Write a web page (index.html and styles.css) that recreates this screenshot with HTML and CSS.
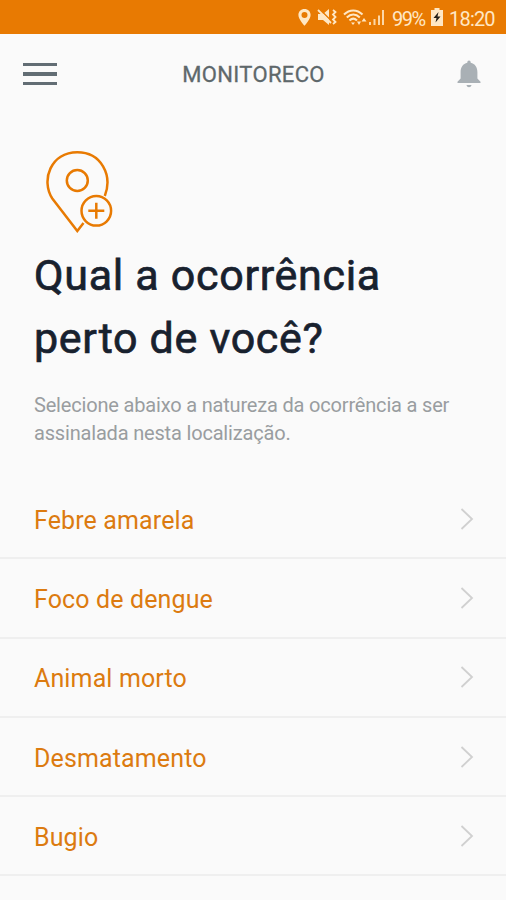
FILE: index.html
```html
<!DOCTYPE html>
<html lang="pt-BR">
<head>
<meta charset="utf-8">
<title>Monitoreco</title>
<link rel="stylesheet" href="styles.css">
</head>
<body>
<div class="status">
  <svg class="status-icons" width="90" height="24" viewBox="0 0 90 24" fill="#ffe7c4">
    <path fill-rule="evenodd" d="M6.500 4C2.900 4 0.400 6.600 0.400 10c0 4.200 6.100 10.800 6.100 10.800S12.600 14.200 12.600 10C12.600 6.600 10.100 4 6.500 4zm0 3a3 3 0 1 1 0 6 3 3 0 0 1 0-6z"/>
    <path d="M20 9h5l6-5v16l-6-5h-5z"/>
    <path d="M22 4.500l12 12" stroke="#e87a02" stroke-width="1.500"/>
    <path d="M20 5l13 13M35 5l2.500 2-2.500 2.500 2.500 2.500-2.500 2.500 2.500 2.500-2.500 2" fill="none" stroke="#ffe7c4" stroke-width="1.800"/>
    <path d="M46 9.500c5.500-5.500 13-5.500 18.500 0M48.800 12.500c4-4 9-4 13 0M51.500 15.500c2.500-2.500 5-2.500 7.500 0" fill="none" stroke="#ffe7c4" stroke-width="2"/>
    <path d="M53 17.500h4l-2 2.500zM59 16.500h4L61 20zM66 13l2.500 3.500h-5z"/>
    <path d="M71 17h2v3h-2zM75.500 14h2v6h-2zM80 10.500h2V20h-2zM84 5h2v15h-2z" fill-opacity=".85"/>
  </svg>
  <span class="percent">99%</span>
  <svg class="battery" width="12" height="18" viewBox="0 0 12 18">
    <path fill="#ffe7c4" d="M3.500 0h5v2H12v16H0V2h3.500z"/>
    <path fill="#252019" d="M7.500 4L2.500 10h3L4.500 14.500l5-6H6.500z"/>
  </svg>
  <span class="clock">18:20</span>
</div>
<header class="topbar">
  <div class="menu"><i></i><i></i><i></i></div>
  <span class="brand">MONITORECO</span>
  <svg class="bell" width="24" height="28" viewBox="0 0 24 28" fill="#a9b0b5">
    <path d="M10.300 2.300a1.700 1.700 0 0 1 3.400 0v.5C18 3.700 20.400 7.500 20.400 12v6.500l3.100 3.200V23H.5v-1.300l3.100-3.200V12c0-4.500 2.400-8.300 6.700-9.200zM9.500 25h5c-.3 1.500-1.300 2.200-2.500 2.200S9.800 26.500 9.500 25z"/>
  </svg>
</header>
<main>
  <section class="intro">
    <svg class="pin" width="70" height="84" viewBox="0 0 70 84" fill="none" stroke="#e87a02" stroke-width="2.500">
      <path d="M38.500 74L32.300 82 7.300 49.500C-4.500 31 6 3.200 32.300 3.200c24 0 35.500 23 27.500 43.800"/>
      <circle cx="32.300" cy="31.500" r="10.500"/>
      <circle cx="51.300" cy="61.800" r="14.800"/>
      <path d="M43.300 61.800h16M51.300 53.800v16"/>
    </svg>
    <h1><span class="first">Qual a ocorrência</span><br><span class="second">perto de você?</span></h1>
    <p>Selecione abaixo a natureza da ocorrência a ser<br>assinalada nesta localização.</p>
  </section>
  <ul class="list">
    <li><span>Febre amarela</span><svg class="chevron" width="14" height="22" viewBox="0 0 14 22"><path d="M1.500 1L12 11 1.500 21"/></svg></li>
    <li><span>Foco de dengue</span><svg class="chevron" width="14" height="22" viewBox="0 0 14 22"><path d="M1.500 1L12 11 1.500 21"/></svg></li>
    <li><span>Animal morto</span><svg class="chevron" width="14" height="22" viewBox="0 0 14 22"><path d="M1.500 1L12 11 1.500 21"/></svg></li>
    <li><span>Desmatamento</span><svg class="chevron" width="14" height="22" viewBox="0 0 14 22"><path d="M1.500 1L12 11 1.500 21"/></svg></li>
    <li><span>Bugio</span><svg class="chevron" width="14" height="22" viewBox="0 0 14 22"><path d="M1.500 1L12 11 1.500 21"/></svg></li>
  </ul>
</main>
</body>
</html>
```
FILE: styles.css
```css
* { box-sizing: border-box; }
body {
  margin: 0;
  height: 900px;
  overflow: hidden;
  background: #fafafa;
  font-family: Roboto, "Liberation Sans", sans-serif;
}
svg { display: block; flex: none; }
.status {
  height: 34px;
  padding: 3px 11px 0 0;
  background: #e87a02;
  color: #ffe7c4;
  display: flex;
  align-items: center;
  justify-content: flex-end;
  font-size: 20px;
}
.status-icons { margin: -3px 4px 0 0; }
.percent { width: 34px; letter-spacing: -1.5px; white-space: nowrap; }
.battery { margin: -3px 6px 0 5px; }
.clock { width: 46px; letter-spacing: -0.8px; white-space: nowrap; }
.topbar {
  height: 80px;
  padding: 0 25px 0 23px;
  display: flex;
  align-items: center;
  justify-content: space-between;
}
.menu { width: 34px; display: flex; flex-direction: column; gap: 6px; }
.menu i { height: 3.500px; background: #626d74; }
.brand {
  margin-right: 7px;
  color: #5e686b;
  font-size: 22px;
  letter-spacing: 0.350px;
  -webkit-text-stroke: 0.300px #5e686b;
}
.intro { padding: 35px 34px 0; }
.pin { margin-left: 11px; }
h1 {
  margin: 11px 0 0;
  color: #18212e;
  font-size: 43px;
  font-weight: 400;
  line-height: 63px;
  letter-spacing: 0.700px;
  -webkit-text-stroke: 0.700px #18212e;
  white-space: nowrap;
}
.intro p {
  margin: 21px 0 0;
  color: #999da0;
  font-size: 20px;
  line-height: 28px;
  letter-spacing: -0.180px;
  white-space: nowrap;
}
.list { margin: 33px 0 0; padding: 0; list-style: none; }
.list li {
  height: 79.300px;
  padding: 0 32px 0 34px;
  display: flex;
  align-items: center;
  justify-content: space-between;
  border-bottom: 2px solid #efefef;
  color: #dc7b10;
  font-size: 25px;
  letter-spacing: 0.130px;
}
.list span { padding-top: 3px; }
.chevron { fill: none; stroke: #d0d0d0; stroke-width: 1.800; }
```
